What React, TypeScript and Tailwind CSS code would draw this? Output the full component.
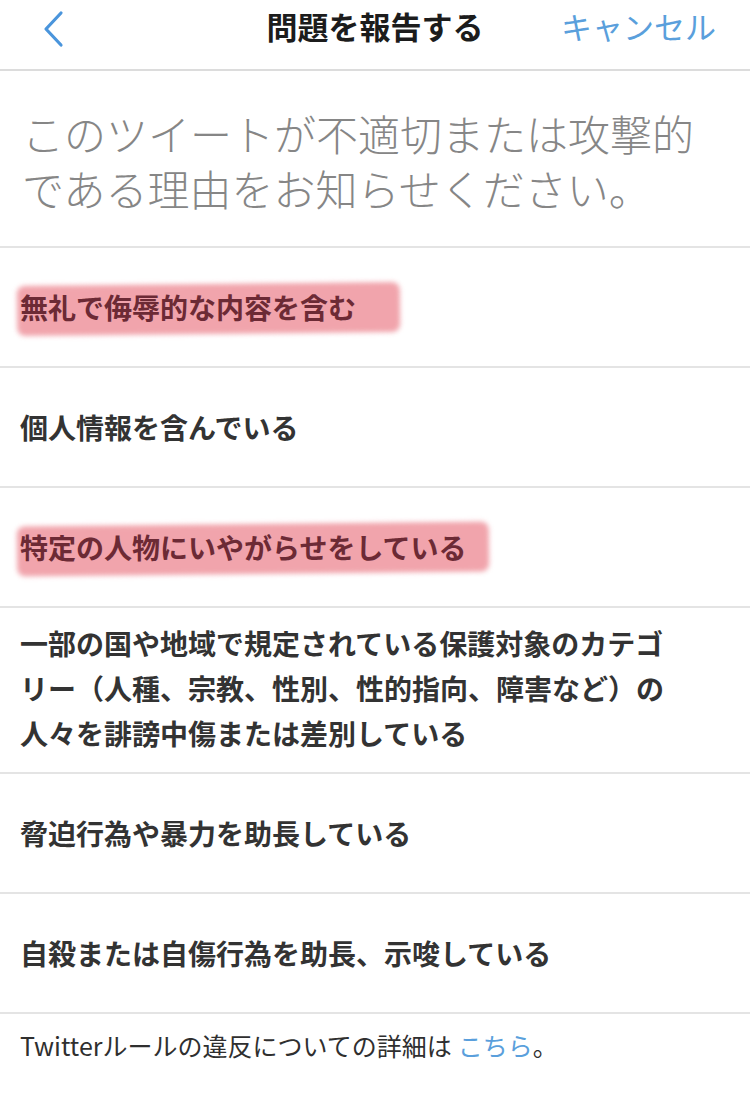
import { ReactNode } from "react";

const font = { fontFamily: '"Noto Sans CJK JP", "Noto Sans", sans-serif' };

type Reason = {
  label: ReactNode;
  marked?: boolean;
  extend?: string;
  tall?: boolean;
};

const reasons: Reason[] = [
  { label: "無礼で侮辱的な内容を含む", marked: true, extend: "-right-[44px]" },
  { label: "個人情報を含んでいる" },
  { label: "特定の人物にいやがらせをしている", marked: true, extend: "-right-[22px]" },
  {
    label: (
      <>
        一部の国や地域で規定されている保護対象のカテゴ
        <br />
        リー（人種、宗教、性別、性的指向、障害など）の
        <br />
        人々を誹謗中傷または差別している
      </>
    ),
    tall: true
  },
  { label: "脅迫行為や暴力を助長している" },
  { label: "自殺または自傷行為を助長、示唆している" }
];

function BackChevron() {
  return (
    <svg width="28" height="40" viewBox="0 0 28 40" fill="none" aria-hidden="true">
      <path
        d="M21 4 L6 20 L21 36"
        stroke="#4a95dc"
        strokeWidth="3.2"
        strokeLinecap="round"
        strokeLinejoin="round"
      />
    </svg>
  );
}

function ReasonRow({ reason }: { reason: Reason }) {
  return (
    <button
      type="button"
      className={
        reason.tall
          ? "flex w-full items-center border-b-2 border-[#e4e4e4] pt-[13px] pb-[16px] pl-[20px] text-left"
          : "flex h-[120px] w-full items-center border-b-2 border-[#e4e4e4] pl-[20px] text-left"
      }
    >
      <span
        className={
          reason.marked
            ? "relative inline-block text-[28px] font-bold leading-[45px] text-[#6c2a35]"
            : "relative inline-block text-[28px] font-bold leading-[45px] text-[#333333]"
        }
      >
        {reason.marked ? (
          <span
            className={`absolute -left-[3px] -top-[1px] -bottom-[4px] ${reason.extend} -rotate-[0.6deg] rounded-[8px] bg-[#f1a4ac] blur-[2.5px]`}
          />
        ) : null}
        <span className="relative">{reason.label}</span>
      </span>
    </button>
  );
}

export default function App() {
  return (
    <div className="min-h-[1099px] w-[750px] bg-white" style={font}>
      <header className="grid h-[71px] grid-cols-[1fr_auto_1fr] items-center border-b-2 border-[#dcdcdc] pb-[18px]">
        <button type="button" className="flex items-center pl-[40px] pt-[6px]" aria-label="戻る">
          <BackChevron />
        </button>
        <h1 className="text-[31px] font-bold leading-none text-[#1c1c1c]">問題を報告する</h1>
        <button
          type="button"
          className="justify-self-end pr-[34px] text-[31px] leading-none text-[#5a9fdc]"
        >
          キャンセル
        </button>
      </header>

      <p className="border-b-2 border-[#e4e4e4] pl-[22px] pr-[20px] pt-[34px] pb-[31px] text-[42px] font-light leading-[55px] text-[#868686]">
        このツイートが不適切または攻撃的
        <br />
        である理由をお知らせください。
      </p>

      <div className="flex flex-col">
        {reasons.map((reason, index) => (
          <ReasonRow key={index} reason={reason} />
        ))}
      </div>

      <p className="px-[20px] pt-[13px] text-[25px] leading-[36px] text-[#2f2f2f]">
        Twitterルールの違反についての詳細は
        <a href="#" className="ml-[6px] text-[#5a9fdc]">
          こちら
        </a>
        。
      </p>
    </div>
  );
}
